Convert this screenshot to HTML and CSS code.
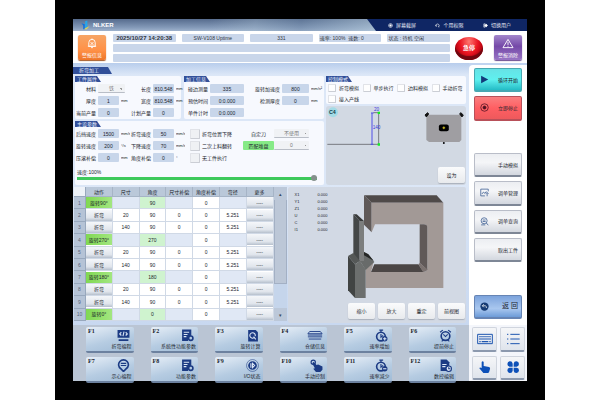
FILE: index.html
```
<!DOCTYPE html>
<html lang="zh-CN">
<head>
<meta charset="utf-8">
<title>折弯加工</title>
<link rel="stylesheet" href="styles.css">
</head>
<body>
<div class="device">
<div class="screen">
  <header class="titlebar">
    <div class="brand">
      <svg class="logo" viewBox="0 0 24 24"><path d="M1 7l9 3v13H6V13z" fill="#0a6fe0"/><path d="M11 2l6-2v18l-6 5z" fill="#27a6ea"/><path d="M13 19l10-4-8 8H8z" fill="#e6d352"/></svg>
      <span>NLKER</span>
    </div>
    <nav class="topnav">
      <a href="#"><svg viewBox="0 0 24 24"><circle cx="12" cy="12" r="9"/><circle cx="12" cy="12" r="4" fill="#fff"/></svg>屏幕截屏</a>
      <a href="#"><svg viewBox="0 0 24 24"><path d="M4 13a8 8 0 1 1 14 5M4 9v6h6M20 20l-5-3"/></svg>个用权限</a>
      <a href="#"><svg viewBox="0 0 24 24"><path d="M10 4H4v16h6"/><path d="M8 8h6V4l8 8-8 8v-4H8z" fill="#fff"/></svg>切换用户</a>
    </nav>
  </header>

  <section class="status">
    <button class="tile orange"><svg viewBox="0 0 24 24"><path d="M5 18V10a7 7 0 0 1 14 0v8zM3 18h18M10 21h4M12 1v2M9 9l6 6M15 9l-6 6"/></svg>警报信息</button>
    <div class="cells">
      <span class="cell date">2025/10/27 14:20:38</span>
      <span class="cell">SW-V108 Uptime</span>
      <span class="cell">331</span>
      <span class="cell start">速率: 100%&nbsp; 速数: 0</span>
      <span class="cell start">状态 : 待机 空闲</span>
      <span class="cell wide"></span>
      <span class="cell wide"></span>
    </div>
    <button class="stop">急停</button>
    <button class="tile purple"><svg viewBox="0 0 24 24"><path d="M12 3L23 21H1zM12 9v6M12 17v2"/></svg>警报消除</button>
  </section>

  <div class="work">
    <main class="main">
      <h1 class="tab page-tab">折弯加工</h1>
      <div class="upper">
        <div class="forms">
          <section class="panel part">
            <h2 class="tab">工件属性</h2>
            <div class="fields two">
              <label class="field"><span>材料</span><select class="mid"><option>铁</option></select></label>
              <label class="field"><span>长度</span><input value="810.548"><i>mm</i></label>
              <label class="field"><span>厚度</span><input value="1"><i>mm</i></label>
              <label class="field"><span>宽度</span><input value="810.548"><i>mm</i></label>
              <label class="field"><span>当前产量</span><input value="0"></label>
              <label class="field"><span>计划产量</span><input value="0"></label>
            </div>
          </section>
          <section class="panel info">
            <h2 class="tab">加工信息</h2>
            <div class="fields info-grid">
              <label class="field long"><span>碰边测量</span><input value="335"></label>
              <label class="field rot"><span>旋转加速度</span><input value="800"><i>mm/s²</i></label>
              <label class="field long"><span>预估时间</span><input value="0:0.000"></label>
              <label class="field rot"><span>检测厚度</span><input value="0"><i>mm</i></label>
              <label class="field long"><span>单件计时</span><input value="0:0.000"></label>
            </div>
          </section>
          <section class="panel params">
            <h2 class="tab">主设参数</h2>
            <div class="param-row">
              <div class="fields two">
                <label class="field"><span>后挡速度</span><input value="1500"><i>mm/s</i></label>
                <label class="field"><span>折弯速度</span><input value="50"><i>mm/s</i></label>
                <label class="field"><span>旋转速度</span><input value="200"><i>°/s</i></label>
                <label class="field"><span>下降速度</span><input value="70"><i>mm/s</i></label>
                <label class="field"><span>压滚补偿</span><input value="0"><i>mm</i></label>
                <label class="field"><span>角度补偿</span><input value="0"><i>°</i></label>
              </div>
              <div class="checks">
                <label><input type="checkbox">折弯位置下降</label>
                <label><input type="checkbox">二次上料翻转</label>
                <label><input type="checkbox">无工件执行</label>
              </div>
              <div class="tools">
                <label for="tool">自定刀</label><select id="tool"><option>不使用</option></select>
                <button class="match">匹配堆盘</button><select aria-label="堆盘"><option>0</option></select>
              </div>
            </div>
            <label class="speed">速度:100%<input type="range" min="0" max="100" value="100"></label>
          </section>
        </div>
        <div class="modes-col">
          <section class="panel modes">
            <h2 class="tab">控制模式</h2>
            <div class="mode-grid">
              <label><input type="checkbox">折弯模拟</label>
              <label><input type="checkbox">单步执行</label>
              <label><input type="checkbox">边料模拟</label>
              <label><input type="checkbox">手动折弯</label>
              <label><input type="checkbox">接入产线</label>
            </div>
          </section>
          <section class="sketch">
            <div class="sketch-top">
              <svg class="profile" viewBox="18 132 168 120">
                <circle cx="39" cy="151" r="15" fill="#a4dbe6"/><text x="27" y="157" class="c4">C4</text>
                <path d="M22 247H176V152H160" fill="none" stroke="#777a80" stroke-width="3"/>
                <path d="M156 153V247M153 153h8M152 247h8" stroke="#514fe8" stroke-width="3"/>
                <path d="M173 149h7v7h-7zM173 244h7v7h-7z" fill="#12ef22"/>
                <text x="162" y="146" class="dim">20</text><text x="158" y="200" class="dim">140</text>
              </svg>
              <svg class="plate" viewBox="314 146 122 100">
                <path d="M322 157H426V234L420 240H328L320 234V160z" fill="#9f9ea2"/>
                <path d="M316 158l8-7 3 4-7 9zM432 158l-8-7-3 4 7 9z" fill="#111" stroke="#111" stroke-width="3"/>
                <circle cx="373" cy="243" r="3"/><rect x="358" y="187" width="30" height="20" rx="6"/><path d="M369 197h8M373 193v8" stroke="#d8c72a" stroke-width="3"/>
              </svg>
            </div>
            <button class="btn">设为</button>
          </section>
        </div>
      </div>

      <div class="lower">
        <div class="table-wrap">
          <table>
            <thead><tr><th class="num corner"></th><th>动作</th><th>尺寸</th><th>角度</th><th>尺寸补偿</th><th>角度补偿</th><th>弯径</th><th>更多</th></tr></thead>
            <tbody>
              <tr class="turn"><th class="num">1</th><td><button>旋转90°</button></td><td></td><td>90</td><td></td><td>0</td><td></td><td><button>----</button></td></tr>
              <tr><th class="num">2</th><td><button>折弯</button></td><td>20</td><td>90</td><td>0</td><td>0</td><td>5.251</td><td><button>----</button></td></tr>
              <tr><th class="num">3</th><td><button>折弯</button></td><td>140</td><td>90</td><td>0</td><td>0</td><td>5.251</td><td><button>----</button></td></tr>
              <tr class="turn"><th class="num">4</th><td><button>旋转270°</button></td><td></td><td>270</td><td></td><td>0</td><td></td><td><button>----</button></td></tr>
              <tr><th class="num">5</th><td><button>折弯</button></td><td>20</td><td>90</td><td>0</td><td>0</td><td>5.251</td><td><button>----</button></td></tr>
              <tr><th class="num">6</th><td><button>折弯</button></td><td>140</td><td>90</td><td>0</td><td>0</td><td>5.251</td><td><button>----</button></td></tr>
              <tr class="turn"><th class="num">7</th><td><button>旋转180°</button></td><td></td><td>180</td><td></td><td>0</td><td></td><td><button>----</button></td></tr>
              <tr><th class="num">8</th><td><button>折弯</button></td><td>20</td><td>90</td><td>0</td><td>0</td><td>5.251</td><td><button>----</button></td></tr>
              <tr><th class="num">9</th><td><button>折弯</button></td><td>140</td><td>90</td><td>0</td><td>0</td><td>5.251</td><td><button>----</button></td></tr>
              <tr class="turn"><th class="num">10</th><td><button>旋转0°</button></td><td></td><td>0</td><td></td><td>0</td><td></td><td><button>----</button></td></tr>
            </tbody>
          </table>
          <div class="scroll"><button aria-label="上">▴</button><div class="thumb"></div><div class="rail"></div><button aria-label="下">▾</button></div>
        </div>
        <section class="view">
          <div class="scene">
            <dl><dt>X1</dt><dd>0.000</dd><dt>Y1</dt><dd>0.000</dd><dt>Z1</dt><dd>0.000</dd><dt>U</dt><dd>0.000</dd><dt>C</dt><dd>0.000</dd><dt>I1</dt><dd>0.000</dd></dl>
            <svg class="model" viewBox="186 36 294 318">
              <path d="M237 40H455L475 62H260z" fill="#4f4a49"/>
              <path d="M237 40L260 62V151L237 128z" fill="#5f5958"/>
              <path d="M260 62H475V318H242V262L266 240L258 270H414Q427 270 427 258V137Q427 127 416 127H270L260 151z" fill="#a29996"/>
              <path d="M404 127H416Q427 127 427 137V264L404 243z" fill="#605958"/>
              <path d="M268 247H400L416 270H258z" fill="#4b4645"/>
              <path d="M404 243L427 262Q425 270 414 270L400 247z" fill="#7b7270"/>
              <path d="M205 97L224 117V240L205 222z" fill="#444747"/>
              <path d="M224 117H237V240H224z" fill="#7c7e7e"/>
              <path d="M205 97H215L237 117H224z" fill="#383a3a"/>
              <path d="M189 222L205 213L225 237L210 247z" fill="#555857"/>
              <path d="M237 210L250 217L268 240L242 264L225 237H237z" fill="#686b6a"/>
              <path d="M237 210L250 217L266 236L237 220z" fill="#242625"/>
              <path d="M189 222L210 247V348L189 325z" fill="#414443"/>
              <path d="M210 247L225 237L242 262V348H210z" fill="#6c6f6e"/>
            </svg>
          </div>
          <div class="view-actions"><button class="btn">缩小</button><button class="btn">放大</button><button class="btn">重定</button><button class="btn">前视图</button></div>
        </section>
      </div>
    </main>

    <aside class="side">
      <button class="cyan"><svg viewBox="0 0 24 24"><path d="M3 2L22 12L3 22z" fill="#123a7a"/></svg><span>循环开始</span></button>
      <button class="red"><svg viewBox="0 0 24 24" fill="none" stroke="#4e1220" stroke-width="2"><circle cx="12" cy="12" r="10"/><circle cx="12" cy="12" r="4" fill="#4e1220"/></svg><span>立即停止</span></button>
      <div class="gap"></div>
      <button><span>手动模拟</span></button>
      <button><svg viewBox="0 0 24 24" fill="none" stroke="#35588f" stroke-width="2"><path d="M22 9V3H2v18h11M5 16l4-5 4 3 4-5M19 22v-9M15 15l4-3 4 3"/></svg><span>调单管理</span></button>
      <button><svg viewBox="0 0 24 24" fill="none" stroke="#35588f" stroke-width="2"><circle cx="11" cy="10" r="8"/><path d="M7 8h8M7 12h8M17 16l5 6M3 21h11"/></svg><span>调单查询</span></button>
      <button><span>取出工件</span></button>
      <div class="gap"></div>
      <button class="blue"><svg viewBox="0 0 24 24"><circle cx="12" cy="12" r="11" fill="#153a73"/><path d="M7 10h7q4 1 3 6M10 6l-4 4 4 4" fill="none" stroke="#fff" stroke-width="2"/></svg><span>返 回</span></button>
    </aside>
  </div>

  <footer class="footer">
    <div class="keys">
      <button><b>F1</b><svg viewBox="0 0 24 24"><path d="M1 2h22v14H1zM3 19h18v3H3z" fill="#1c3b84"/><path d="M8 6L5 9l3 3M16 6l3 3-3 3M13 5l-2 8" stroke="#dce7f5"/></svg><span>折弯编程</span></button>
      <button><b>F2</b><svg viewBox="0 0 24 24"><path d="M2 1h17v11l-6 4v6H2z" fill="#1c3b84"/><path d="M5 6h10M5 10h7M5 14h5" stroke="#dce7f5"/><circle cx="18" cy="17" r="4" stroke="#1c3b84" stroke-width="3"/></svg><span>系统性功能参数</span></button>
      <button><b>F3</b><svg viewBox="0 0 24 24"><path d="M4 2h14l4 4v17H4z" fill="#1c3b84"/><path d="M15 16a5 5 0 1 1 2-3M14 14l4 5" stroke="#dce7f5"/></svg><span>旋转计算</span></button>
      <button><b>F4</b><svg class="broad" viewBox="0 0 36 24"><path d="M6 3h24l4 5H2zM2 11h32M2 15h32M4 20h28" stroke="#1c3b84" stroke-width="2"/></svg><span>仓储信息</span></button>
      <button><b>F5</b><svg viewBox="0 0 24 24"><circle cx="11" cy="14" r="8" stroke="#1c3b84" stroke-width="3"/><path d="M8 2h7M11 2v4M11 9v6l4-3" stroke="#1c3b84"/><circle cx="18" cy="18" r="5" fill="#1c3b84"/><path d="M15 18h6M18 15v6" stroke="#dce7f5"/></svg><span>速率增加</span></button>
      <button><b>F6</b><svg viewBox="0 0 24 24"><circle cx="12" cy="13" r="8" stroke="#1c3b84" stroke-width="3"/><path d="M2 6l5-4M22 6l-5-4M5 23l3-3M19 23l-3-3M8 10l4 4 4-4" stroke="#1c3b84"/></svg><span>提前停止</span></button>
      <button><b>F7</b><svg viewBox="0 0 24 24"><path d="M12 23l-5-5A9 9 0 1 1 17 18z" stroke="#1c3b84" stroke-width="3"/><path d="M7 8h10M7 12h10" stroke="#1c3b84"/></svg><span>示心编程</span></button>
      <button><b>F8</b><svg viewBox="0 0 24 24"><path d="M2 1h17v11l-6 4v6H2z" fill="#1c3b84"/><path d="M5 6h10M5 10h7M5 14h5" stroke="#dce7f5"/><circle cx="18" cy="17" r="4" stroke="#1c3b84" stroke-width="3"/></svg><span>功能参数</span></button>
      <button><b>F9</b><svg viewBox="0 0 24 24"><circle cx="12" cy="12" r="11" stroke="#1c3b84" stroke-width="1"/><circle cx="12" cy="12" r="8" fill="#1c3b84"/><path d="M9 8v8M12 8v8l4-4z" stroke="#dce7f5"/></svg><span>I/O状态</span></button>
      <button><b>F10</b><svg viewBox="0 0 24 24"><path d="M7 5l5 6 3-1 8 4v6l-4 4h-8l-5-6 3-1-5-9z" fill="#1c3b84"/><circle cx="6" cy="6" r="4" stroke="#1c3b84"/></svg><span>手动控制</span></button>
      <button><b>F11</b><svg viewBox="0 0 24 24"><circle cx="11" cy="14" r="8" stroke="#1c3b84" stroke-width="3"/><path d="M8 2h7M11 2v4M11 9v6l4-3" stroke="#1c3b84"/><circle cx="18" cy="18" r="5" fill="#1c3b84"/><path d="M15 18h6" stroke="#dce7f5"/></svg><span>速率减少</span></button>
      <button><b>F12</b><svg viewBox="0 0 24 24"><path d="M3 1h11l5 5v16H3z" fill="#1c3b84"/><path d="M6 10h8M6 14h6" stroke="#dce7f5"/><circle cx="18" cy="18" r="5" fill="#dce7f5" stroke="#1c3b84"/><path d="M18 15v3h3" stroke="#1c3b84"/></svg><span>数控编辑</span></button>
    </div>
    <div class="pads">
      <button aria-label="键盘"><svg viewBox="0 0 48 36"><path d="M2 4h44v28H2z" fill="none" stroke="#1e56b0" stroke-width="3"/><path d="M7 11h34M7 18h34" stroke="#1e56b0" stroke-width="4" stroke-dasharray="4 2"/><path d="M7 26h4M14 26h20M37 26h4" stroke="#1e56b0" stroke-width="4"/></svg></button>
      <button aria-label="列表"><svg viewBox="0 0 48 36"><path d="M6 4h4M16 4h28M6 18h4M16 18h28M6 32h4M16 32h28" stroke="#1e56b0" stroke-width="3"/></svg></button>
      <button aria-label="手动"><svg viewBox="0 0 48 36"><path d="M14 3q3-4 6 0v12l16 3q4 1 3 6l-3 10-4 3H20L7 22q1-4 7-1z" fill="#0d50b8"/></svg></button>
      <button aria-label="应用"><svg viewBox="0 0 48 36" fill="#0d50b8"><path d="M23 17H14a8 8 0 1 1 9-9zM26 17h9a8 8 0 1 0-9-9zM23 20H14a8 8 0 1 0 9 9zM26 20h9a8 8 0 1 1-9 9z"/></svg></button>
    </div>
  </footer>
</div>
</div>
</body>
</html>
```
FILE: styles.css
```
* { box-sizing: border-box; }
body {
  margin: 0;
  background: #fff;
  color: #20242c;
  font: 5px/6px "Liberation Sans", "Noto Sans CJK SC", sans-serif;
}
button, input, select { font: inherit; color: inherit; margin: 0; padding: 0; border: 0; }
h1, h2, dl, dd { margin: 0; font: inherit; }
svg { display: block; }
button { white-space: nowrap; }

.device { margin: 0 55px; padding: 19px 18px; min-height: 100vh; background: #000; }
.screen { background: #fff; }

.titlebar { display: flex; height: 12px; background: linear-gradient(#566b8d, #8399b8 70%, #9fb3cd); }
.brand { flex: 1; display: flex; align-items: center; gap: 3px; padding-left: 8px; margin-right: -9px; color: #fff; font-size: 6px; font-weight: bold; background: linear-gradient(100deg, transparent 45%, #a9bfd055 60%, #6c86a555 75%, #b5cbdc99); }
.logo { width: 9px; height: 10px; }
.topnav { flex: 0 0 160px; display: flex; justify-content: space-between; align-items: center; padding: 0 16px 0 21px; background: #0f2664; clip-path: polygon(0 0, 100% 0, 100% 100%, 9px 100%); }
.topnav a { display: flex; align-items: center; gap: 3px; color: #e5eaf5; text-decoration: none; }
.topnav svg { width: 5px; height: 5px; fill: none; stroke: #fff; stroke-width: 3; }

.status { display: flex; align-items: center; height: 32px; padding: 0 5px; }
.tile { width: 28px; height: 25px; display: flex; flex-direction: column; align-items: center; justify-content: space-between; padding: 3px 0 2px; border-radius: 2px; color: #fff; }
.tile svg { width: 12px; height: 11px; fill: none; stroke: #fff; stroke-width: 2; }
.orange { background: linear-gradient(#f7a565, #ff9147 60%, #ee762a); box-shadow: 0 1px 1px #a65a28; }
.purple { background: linear-gradient(#a287cb, #7549a8 45%, #9874c4); box-shadow: 0 1px 1px #6c4d91; }
.cells { flex: 1; display: grid; grid-template-columns: repeat(5, minmax(0, 1fr)); grid-template-rows: 8px 8px 8px; gap: 2px 6px; margin: 2px 5px 0 7px; }
.cell { background: #c9d6ea; border-radius: 1px; text-align: center; line-height: 8px; white-space: nowrap; overflow: hidden; color: #30353e; }
.date { font-size: 6px; font-weight: bold; }
.start { text-align: left; padding-left: 1px; }
.wide { grid-column: 1 / -1; }
.stop { width: 28px; height: 23px; margin: 2px 11px 0 0; border-radius: 50%; color: #fff; font-size: 6px; font-weight: bold; background: radial-gradient(ellipse at 50% 20%, #ff7770, #ea1522 45%, #c20713 65%); box-shadow: inset 0 -4px 1px #700710; }

.work { display: flex; background: #c1d4f0; }
.main { flex: 1; min-width: 0; padding: 4px 3px 2px 0; background: linear-gradient(#b8cdec, #dce7f7 12px, #dce7f7 118px, #c8d8f0); }
.tab { background: #314f99; color: #e8eefb; height: 6px; width: 26px; padding-left: 2px; line-height: 6px; white-space: nowrap; clip-path: polygon(0 0, calc(100% - 4px) 0, 100% 100%, 0 100%); }
.page-tab { width: 39px; height: 7px; padding-left: 6px; line-height: 7px; margin-bottom: 2px; }
.upper { display: grid; grid-template-columns: minmax(0, 249fr) minmax(0, 140fr); gap: 2px; padding-left: 2px; height: 109px; }
.forms { display: grid; grid-template-columns: minmax(0, 106fr) minmax(0, 140fr); grid-template-rows: 43px 64px; gap: 2px 3px; }
.panel { background: #f7f9fe; border-radius: 2px; min-width: 0; }
.params { grid-column: 1 / -1; }
.fields { display: grid; grid-auto-rows: 9px; row-gap: 3px; padding-top: 2px; }
.two { grid-template-columns: 55px 55px; }
.info-grid { grid-template-columns: 68px 1fr; }
.field { display: grid; grid-template-columns: 21px 21px 1fr; column-gap: 2px; align-items: center; white-space: nowrap; }
.field.long { grid-template-columns: 24px 34px; }
.field.rot { grid-template-columns: 28px 27px 1fr; }
.field span { justify-self: end; }
.field i { font-style: normal; font-size: 4px; overflow: hidden; }
.field input { width: 100%; height: 9px; background: #c8d6ea; border-radius: 1px; text-align: center; }
select { appearance: none; height: 9px; width: 100%; text-align: center; color: #777; border-radius: 1px; border-bottom: 1px solid #b9bec7; background: linear-gradient(45deg, transparent 50%, #999 50%) calc(100% - 3px) 4px / 2px 2px no-repeat, #f0f2f5; }
.field .mid { grid-column: 2 / 4; width: 27px; }
.param-row { display: grid; grid-template-columns: 115px 53px 66px; }
input[type=checkbox] { appearance: none; width: 8px; height: 8px; background: #fefefe; border: 1px solid #e1e3e8; border-right-color: #cbced5; border-bottom-color: #cbced5; border-radius: 1px; flex: none; }
.checks { display: grid; grid-auto-rows: 9px; row-gap: 3px; padding-top: 2px; }
.checks label, .mode-grid label { display: flex; align-items: center; gap: 2px; white-space: nowrap; }
.checks input[type=checkbox] { width: 10px; height: 10px; background: #eff1f4; }
.tools { display: grid; grid-template-columns: 31px 35px; grid-auto-rows: 9px; row-gap: 3px; padding-top: 2px; text-align: center; align-items: center; }
.match { height: 9px; background: #86ea86; border-radius: 1px; }
.speed { display: block; padding: 7px 7px 0 2px; }
.speed input { appearance: none; display: block; width: 100%; height: 6px; background: linear-gradient(#3dc95b, #3dc95b) 0 50% / 100% 3px no-repeat; }
.speed input::-webkit-slider-thumb { appearance: none; width: 6px; height: 6px; border-radius: 50%; background: #85908d; }

.modes-col { display: grid; grid-template-rows: 28px 79px; gap: 2px; min-width: 0; }
.mode-grid { display: grid; grid-template-columns: repeat(4, minmax(0, 1fr)); grid-auto-rows: 9px; row-gap: 2px; padding: 1px 0 0 2px; }
.mode-grid label { gap: 3px; }
.sketch { background: #d2d9e3; border-radius: 3px; display: flex; flex-direction: column; justify-content: space-between; align-items: flex-end; padding: 0 1px 2px 0; }
.sketch-top { width: 100%; display: flex; justify-content: space-between; align-items: flex-start; }
.profile { width: 56px; height: 40px; }
.plate { width: 41px; height: 33px; margin-top: 5px; }
.c4 { font-size: 16px; font-weight: bold; fill: #123d4a; }
.dim { font-size: 14px; fill: #3a35e0; }
.btn { width: 27px; height: 16px; border-radius: 2px; background: linear-gradient(#fafbfc, #e8eaed); box-shadow: 0 1px 1px #a9b0bb; }

.lower { display: grid; grid-template-columns: minmax(0, 212fr) minmax(0, 178fr); gap: 1px; margin-top: 2px; height: 136px; padding-left: 1px; }
.table-wrap { display: grid; grid-template-columns: minmax(0, 1fr) 13px; height: 134px; min-width: 0; }
table { width: 100%; height: 134px; table-layout: fixed; border-collapse: separate; border-spacing: 0; background: #fff; text-align: center; }
th, td { padding: 0; height: 12px; font-weight: normal; border-right: 1px solid #d0d9e6; border-bottom: 1px solid #d0d9e6; white-space: nowrap; }
thead th { height: 10px; background: #bac8d9; border-color: #a6b4c6; }
.num { width: 12px; background: #b5c3d6; border-color: #98a8bd; color: #56647a; }
thead .corner { background: #eef2f8; }
td button { display: block; width: 100%; height: 11px; background: linear-gradient(#f5f7fa, #e0e5ec 70%, #b6c0cd); }
.turn td:nth-child(odd) { background: #e0e8f5; }
.turn td:nth-child(4) { background: #cff3cf; }
.turn td:nth-child(2) button { background: linear-gradient(90deg, #80d852, #a2e680); }
.scroll { display: flex; flex-direction: column; background: #c5d5eb; }
.scroll button { height: 13px; background: #bcc8d9; color: #39485f; }
.thumb { flex: 84; background: #bcc7d7; border: 1px solid #a3b0c4; border-top: 0; }
.rail { flex: 24; }

.view { background: #d2d9e4; border-radius: 2px; display: flex; flex-direction: column; justify-content: space-between; padding: 4px 1px 4px 7px; min-width: 0; }
.scene { display: flex; justify-content: space-between; padding-right: 20px; }
dl { display: grid; grid-template-columns: 23px auto; grid-auto-rows: 7px; line-height: 7px; font-size: 4px; }
.model { width: 98px; height: 106px; margin-top: 3px; }
.view-actions { display: flex; justify-content: flex-end; gap: 3px; }

.side { flex: 0 0 58px; display: grid; grid-template-rows: repeat(9, minmax(0, 1fr)); gap: 4px; margin-top: 2px; padding: 3px 5px 6px; background: #fff; border-radius: 4px 0 0 0; }
.side button { display: flex; align-items: center; justify-content: space-between; padding: 0 3px 0 5px; border-radius: 2px; border: 1px solid #b9bdc8; border-bottom: 2px solid #7e8796; background: linear-gradient(#eceef2, #f5f6f8 40%, #d3d7df); }
.side svg { width: 9px; height: 9px; }
.side span { margin-left: auto; }
.side .cyan { background: linear-gradient(#66e2e5, #5ff0ef 50%, #24bcc6); border-color: #48a8b2; }
.side .red { background: linear-gradient(#fa7f7f, #ff5f63 50%, #ee595c); border-color: #b85059; }
.side .blue { background: linear-gradient(#7ca3dc, #a9c7ef 60%, #6c9bd8); border-color: #6684b4; font-size: 7px; }

.footer { display: flex; height: 56px; }
.keys { flex: 1; display: grid; grid-template-columns: repeat(6, minmax(0, 1fr)); gap: 4px 17px; padding: 2px 13px 1px; background: #bac5d4; }
.keys button { display: grid; grid-template-columns: 1fr auto; grid-template-rows: 15px 7px; padding: 1px 2px; border-radius: 2px; background: linear-gradient(165deg, #e6eef7, #b6cce2 55%, #a0bbd6); border-bottom: 2px solid #6c819f; text-align: left; }
.keys b { font: bold 6px/7px "Liberation Serif", "Noto Sans CJK SC", serif; }
.keys svg { width: 13px; height: 13px; margin: 1px 2px 0 0; fill: none; stroke-width: 2; }
.keys .broad { width: 16px; }
.keys span { grid-column: 1 / -1; text-align: right; }
.pads { flex: 0 0 58px; display: grid; grid-template-columns: 1fr 1fr; gap: 4px 3px; padding: 2px 2px 1px 3px; background: #f4f6fb; }
.pads button { display: grid; place-items: center; border-radius: 2px; background: linear-gradient(#f5f6f8, #dfe4ec); border: 1px solid #d0d5de; border-bottom: 2px solid #8c99ae; }
.pads svg { width: 16px; height: 12px; }
```
